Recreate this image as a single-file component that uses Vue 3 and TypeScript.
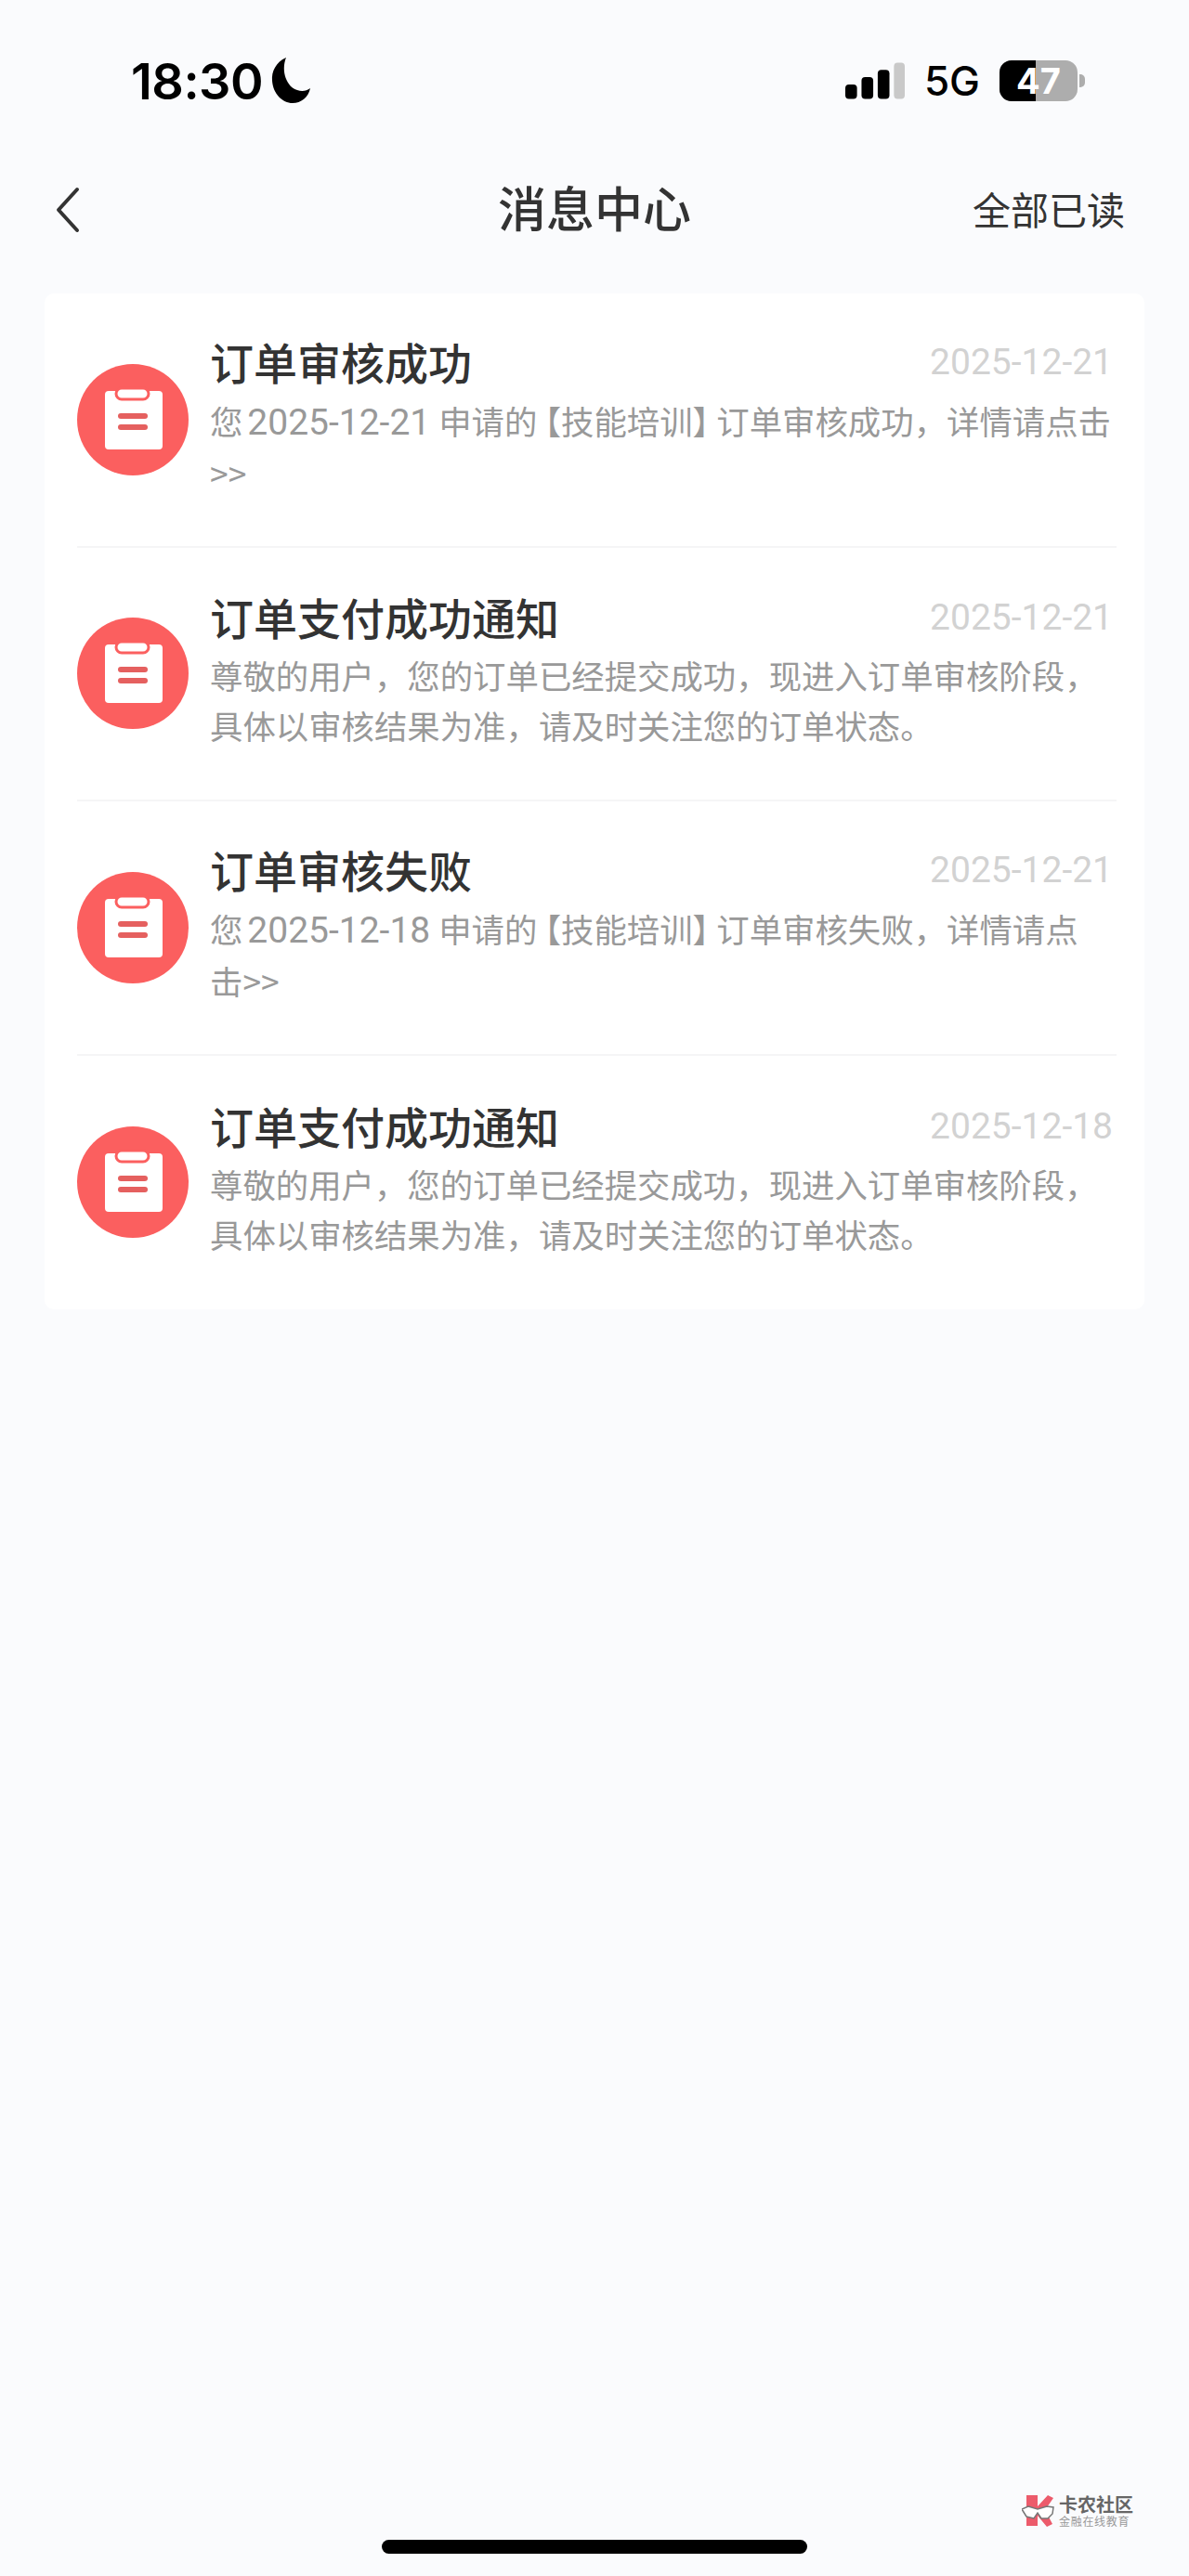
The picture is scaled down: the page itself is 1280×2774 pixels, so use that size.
<script setup lang="ts">
interface Message {
  title: string;
  date: string;
  lines: string[];
}

const messages: Message[] = [
  {
    title: "订单审核成功",
    date: "2025-12-21",
    lines: ["您 2025-12-21 申请的【技能培训】订单审核成功，详情请点击", ">>"],
  },
  {
    title: "订单支付成功通知",
    date: "2025-12-21",
    lines: ["尊敬的用户，您的订单已经提交成功，现进入订单审核阶段，", "具体以审核结果为准，请及时关注您的订单状态。"],
  },
  {
    title: "订单审核失败",
    date: "2025-12-21",
    lines: ["您 2025-12-18 申请的【技能培训】订单审核失败，详情请点", "击>>"],
  },
  {
    title: "订单支付成功通知",
    date: "2025-12-18",
    lines: ["尊敬的用户，您的订单已经提交成功，现进入订单审核阶段，", "具体以审核结果为准，请及时关注您的订单状态。"],
  },
];

// dates and brackets inside a sentence need their own widths
function parts(line: string): string[] {
  return line.split(/(\d{4}-\d{2}-\d{2}|【|】)/);
}

function partClass(p: string): string {
  if (p === "【") return "open";
  if (p === "】") return "close";
  return "num";
}
</script>

<template>
  <div class="page">
    <div class="status">
      <div class="status-left">
        <span class="time">18:30</span>
        <svg class="moon" viewBox="0 0 42 50" width="44" height="50">
          <path d="M16 0C5 5 0 15 1 25c1 14 11 24 22 24 9 0 17-6 19-16-4 3-9 4-14 2C17 32 10 15 16 0z" fill="#000" />
        </svg>
      </div>
      <div class="status-right">
        <svg class="signal" viewBox="0 0 66 40" width="64" height="40">
          <rect x="0" y="24" width="13" height="16" rx="4" fill="#000" />
          <rect x="18" y="16" width="13" height="24" rx="4" fill="#000" />
          <rect x="36" y="8" width="13" height="32" rx="4" fill="#000" />
          <rect x="54" y="0" width="12" height="40" rx="4" fill="#c9c9c9" />
        </svg>
        <span class="net">5G</span>
        <div class="battery">
          <div class="battery-body">
            <div class="battery-fill"></div>
            <span class="battery-num">47</span>
          </div>
          <div class="battery-cap"></div>
        </div>
      </div>
    </div>

    <div class="nav">
      <svg class="back" viewBox="0 0 26 50" width="26" height="50">
        <path d="M23 3L3 25l20 22" fill="none" stroke="#333" stroke-width="4" stroke-linecap="round" stroke-linejoin="round" />
      </svg>
      <div class="nav-title">消息中心</div>
      <div class="nav-action">全部已读</div>
    </div>

    <div class="card">
      <div v-for="(m, i) in messages" :key="i" class="row">
        <div class="icon">
          <svg viewBox="0 0 120 120" width="120" height="120">
            <circle cx="60" cy="60" r="60" fill="#fb5f5f" />
            <rect x="30" y="29" width="62" height="63" rx="4" fill="#fff" />
            <rect x="42" y="26" width="35" height="12" rx="6" fill="#fff" stroke="#fb5f5f" stroke-width="3" />
            <rect x="44" y="53" width="32" height="6" rx="3" fill="#e5605f" />
            <rect x="44" y="65" width="32" height="6" rx="3" fill="#e5605f" />
          </svg>
        </div>
        <div class="content">
          <div class="head">
            <span class="title">{{ m.title }}</span>
            <span class="date">{{ m.date }}</span>
          </div>
          <div class="body">
            <div v-for="(line, j) in m.lines" :key="j" class="line">
              <template v-for="(p, k) in parts(line)" :key="k">
                <span v-if="k % 2 === 1" :class="partClass(p)">{{ p }}</span>
                <template v-else>{{ p }}</template>
              </template>
            </div>
          </div>
        </div>
      </div>
    </div>

    <div class="home-bar"></div>

    <div class="mark">
      <svg viewBox="0 0 36 36" width="36" height="36">
        <path d="M5 1h12v12l11-12 6 3-9 13 8 15-6 3-10-12v11H5z" fill="#ec5b6b" />
        <path d="M0 16l7-3 10 3 10-3 7 1-1 7-5 5-7 0-4-6-4 6-8-2z" fill="#fff" stroke="#777" stroke-width="1.5" />
      </svg>
      <div class="mark-text">
        <div class="mark-name">卡农社区</div>
        <div class="mark-sub">金融在线教育</div>
      </div>
    </div>
  </div>
</template>

<style scoped>
.page {
  position: relative;
  width: 1280px;
  height: 2774px;
  background: #fafbfd;
  font-family: "Noto Sans CJK SC", "Noto Sans", sans-serif;
  display: flex;
  flex-direction: column;
  overflow: hidden;
}

.status {
  display: flex;
  justify-content: space-between;
  align-items: center;
  height: 60px;
  margin-top: 57px;
  padding: 0 112px 0 141px;
}

.status-left {
  display: flex;
  align-items: center;
  gap: 8px;
}

.time {
  font-family: Inter, sans-serif;
  font-size: 54px;
  font-weight: 600;
  letter-spacing: -0.5px;
  color: #000;
}

.status-right {
  display: flex;
  align-items: center;
}

.net {
  font-family: Inter, sans-serif;
  font-size: 44px;
  font-weight: 500;
  color: #000;
  margin: 0 21px;
}

.battery {
  display: flex;
  align-items: center;
  gap: 2px;
}

.battery-body {
  position: relative;
  width: 84px;
  height: 44px;
  border-radius: 13px;
  background: #adadad;
  overflow: hidden;
}

.battery-fill {
  width: 39px;
  height: 100%;
  background: #000;
}

.battery-num {
  position: absolute;
  inset: 0;
  text-align: center;
  font-family: Inter, sans-serif;
  font-size: 38px;
  line-height: 44px;
  font-weight: 700;
  color: #fff;
}

.battery-cap {
  width: 6px;
  height: 14px;
  border-radius: 0 5px 5px 0;
  background: #adadad;
}

.nav {
  display: flex;
  align-items: center;
  justify-content: space-between;
  position: relative;
  height: 68px;
  margin-top: 75px;
  padding: 0 69px 0 60px;
}

.nav-title {
  position: absolute;
  left: 0;
  right: 0;
  top: -5px;
  text-align: center;
  font-size: 52px;
  line-height: 72px;
  font-weight: 500;
  color: #333;
}

.nav-action {
  font-size: 41px;
  line-height: 60px;
  margin-top: -4px;
  color: #333;
}

.card {
  margin: 56px 48px 0;
  padding: 0 30px 0 35px;
  background: #fff;
  border-radius: 10px;
}

.row {
  display: flex;
  align-items: center;
  gap: 23px;
  height: 273.5px;
  box-sizing: border-box;
  border-bottom: 2px solid #f5f5f6;
}

.row:last-child {
  border-bottom: none;
}

.icon {
  flex: none;
  width: 120px;
  height: 120px;
}

.content {
  flex: 1;
  min-width: 0;
  padding-bottom: 16px;
}

.head {
  display: flex;
  justify-content: space-between;
  align-items: center;
  height: 74px;
  padding-right: 4px;
}

.title {
  font-size: 47px;
  font-weight: 500;
  color: #333;
}

.date {
  font-family: Roboto, sans-serif;
  font-size: 39px;
  line-height: 46px;
  margin-top: 3px;
  color: #d2d2d2;
}

.body {
  font-size: 35.4px;
  line-height: 54px;
  color: #999;
}

.line {
  white-space: nowrap;
  word-spacing: -3px;
}

.num {
  font-family: Roboto, sans-serif;
  font-size: 39px;
  margin-right: 4px;
}

.open {
  font-feature-settings: "halt";
  margin-left: 8px;
}

.close {
  font-feature-settings: "halt";
  margin-right: 8px;
}

.home-bar {
  width: 458px;
  height: 15px;
  border-radius: 8px;
  background: #000;
  margin: auto auto 24px;
}

.mark {
  position: absolute;
  left: 1100px;
  top: 2686px;
  display: flex;
  align-items: center;
  gap: 4px;
}

.mark-name {
  font-size: 20px;
  line-height: 22px;
  font-weight: 700;
  color: #666;
}

.mark-sub {
  font-size: 12px;
  line-height: 14px;
  letter-spacing: 0.7px;
  color: #999;
}
</style>
